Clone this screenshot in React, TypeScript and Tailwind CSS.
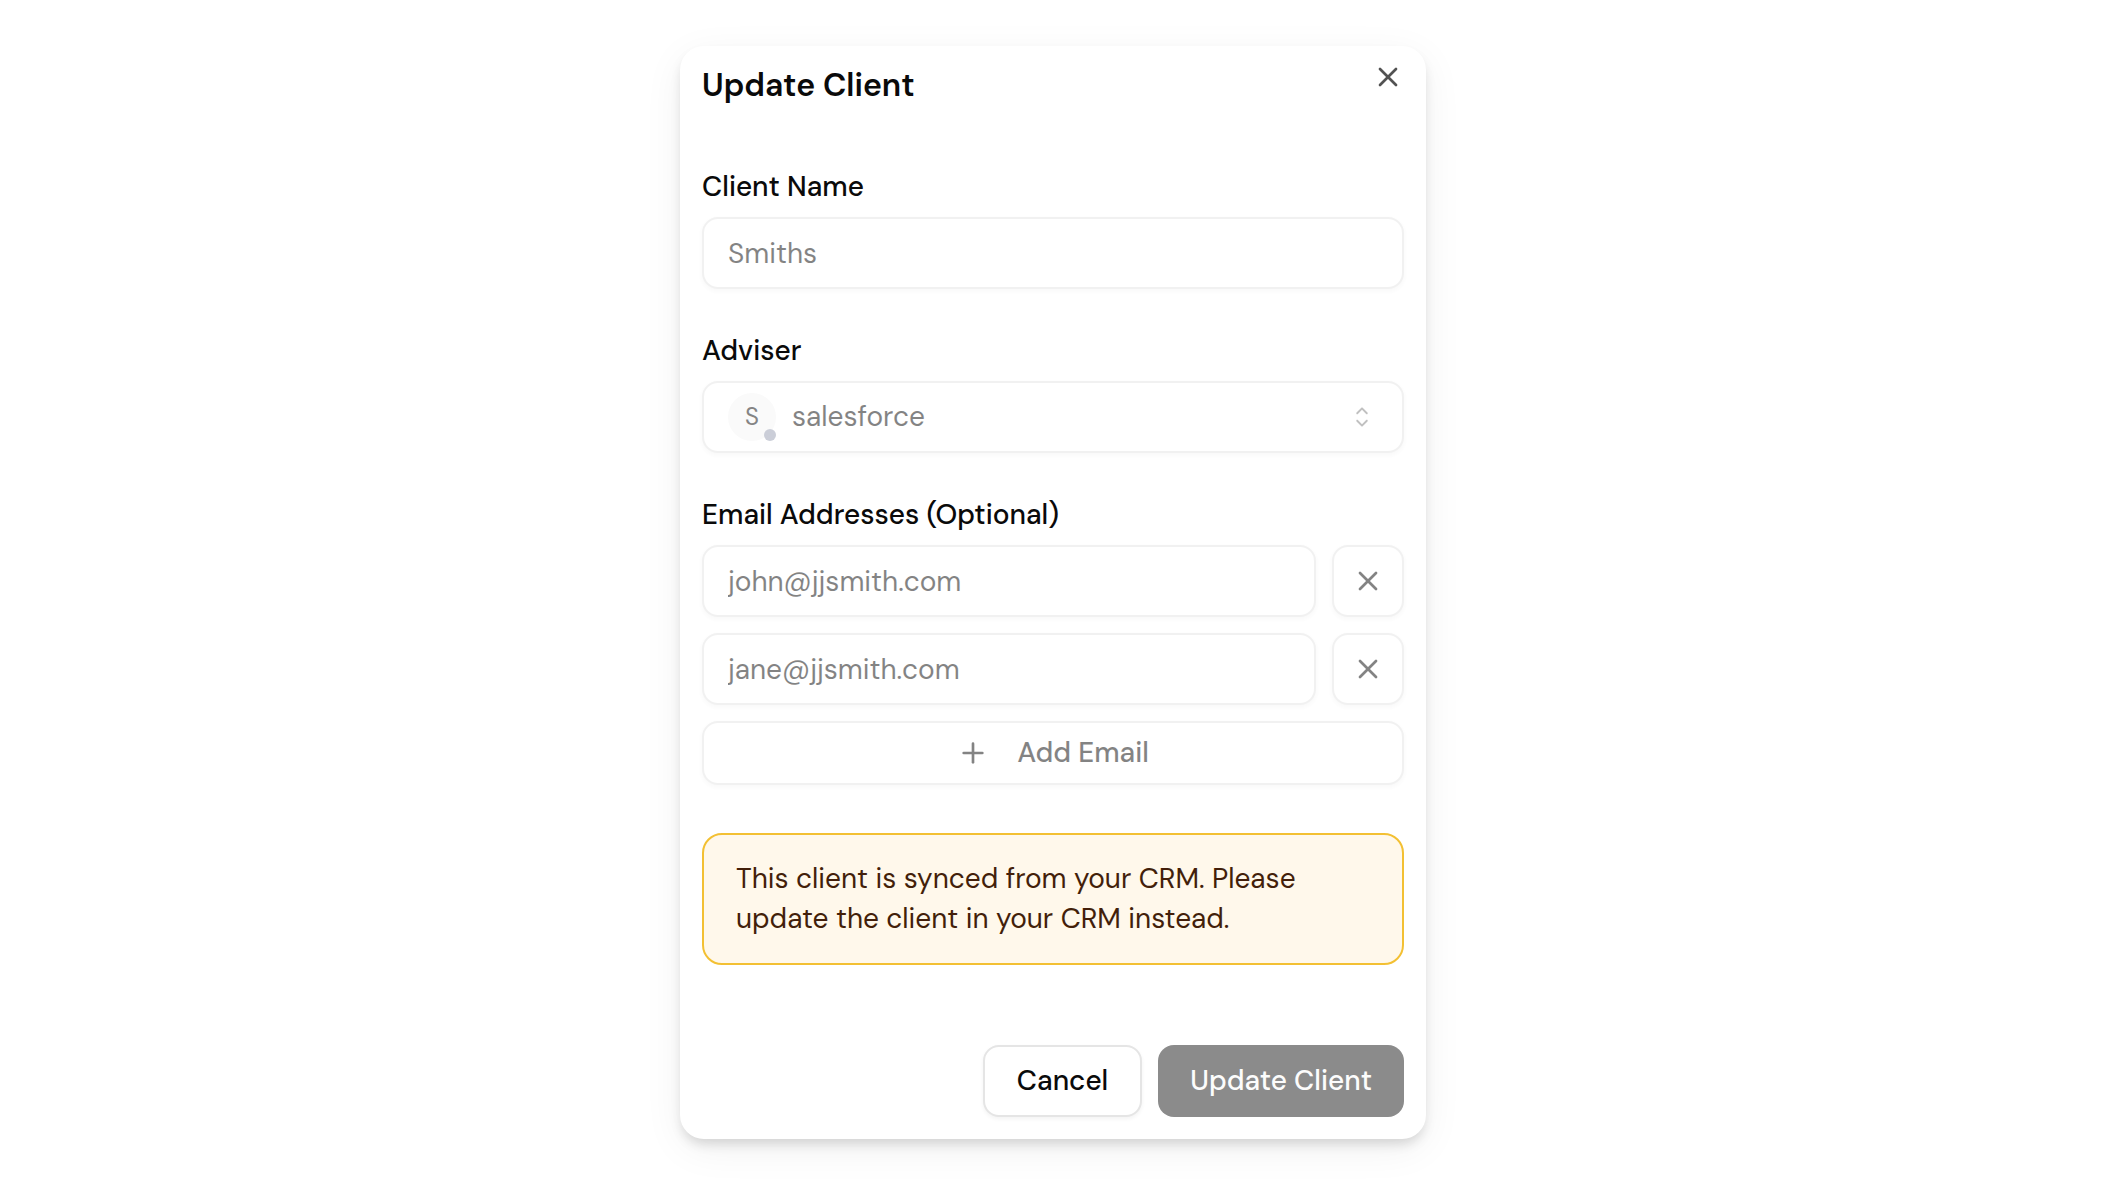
import { useState } from 'react'
import { Plus, X } from 'lucide-react'
import { RxCaretSort } from 'react-icons/rx'

const emails = [
  { id: 'email-0', value: 'john@jjsmith.com' },
  { id: 'email-1', value: 'jane@jjsmith.com' }
]

const advisers = ['salesforce']

const fieldClass =
  'h-[72px] w-full min-w-0 rounded-2xl border-2 border-[#e5e5e5] bg-white px-6 text-[28px] text-neutral-950 shadow-[0_2px_4px_rgba(0,0,0,0.05)] outline-none disabled:opacity-50'

const outlineButtonClass =
  'flex items-center justify-center rounded-2xl border-2 border-[#e5e5e5] bg-white text-[28px] font-medium text-neutral-950 shadow-[0_2px_4px_rgba(0,0,0,0.05)] disabled:opacity-50'

const labelClass = 'text-[28px] leading-7 font-medium text-neutral-950'

export default function App() {
  const [isOpen, setIsOpen] = useState(true)

  if (!isOpen) return null

  return (
    <div className="flex min-h-screen items-center justify-center bg-white font-['DM_Sans','Open_Sans',sans-serif] text-neutral-950">
      <div
        role="dialog"
        aria-labelledby="dialog-title"
        className="w-full max-w-[746px] rounded-3xl bg-white px-[22px] pt-[15px] pb-[22px] shadow-[0_10px_40px_rgba(0,0,0,0.06),0_7px_12px_-2px_rgba(0,0,0,0.14)]"
      >
        {/* Header */}
        <div className="flex items-start justify-between">
          <h2 id="dialog-title" className="text-[32px] leading-12 font-semibold">
            Update Client
          </h2>
          <button type="button" aria-label="Close" onClick={() => setIsOpen(false)} className="opacity-70">
            <X className="size-8" />
          </button>
        </div>

        <form className="mt-16" onSubmit={(e) => e.preventDefault()}>
          <div className="flex flex-col gap-12">
            {/* Client name */}
            <div className="flex flex-col gap-4">
              <label htmlFor="client-name" className={labelClass}>
                Client Name
              </label>
              <input id="client-name" type="text" defaultValue="Smiths" disabled className={fieldClass} />
            </div>

            {/* Adviser */}
            <div className="flex flex-col gap-4">
              <label htmlFor="adviser" className={labelClass}>
                Adviser
              </label>
              <div className="relative">
                <select id="adviser" disabled className={`${fieldClass} block appearance-none pl-[88px]`}>
                  {advisers.map((adviser) => (
                    <option key={adviser}>{adviser}</option>
                  ))}
                </select>
                <div className="pointer-events-none absolute inset-y-0 left-[26px] flex items-center">
                  <div className="relative flex size-12 items-center justify-center rounded-full bg-[#fafafa] text-2xl text-[#848484]">
                    S
                    <span className="absolute right-0 bottom-0 size-3 rounded-full bg-[#cbced8]" />
                  </div>
                </div>
                <div className="pointer-events-none absolute inset-y-0 right-[26px] flex items-center">
                  <RxCaretSort className="size-8 opacity-25" />
                </div>
              </div>
            </div>

            {/* Email addresses */}
            <fieldset>
              <legend className={labelClass}>Email Addresses (Optional)</legend>
              <div className="mt-4 flex flex-col gap-4">
                {emails.map((email, index) => (
                  <div key={email.id} className="flex gap-4">
                    <input
                      id={email.id}
                      type="email"
                      aria-label={`Email ${index + 1}`}
                      defaultValue={email.value}
                      disabled
                      className={fieldClass}
                    />
                    <button
                      type="button"
                      aria-label={`Remove ${email.value}`}
                      disabled
                      className={`${outlineButtonClass} size-[72px] shrink-0`}
                    >
                      <X className="size-8" />
                    </button>
                  </div>
                ))}
                <button type="button" disabled className={`${outlineButtonClass} h-16 w-full gap-7`}>
                  <Plus className="size-8" />
                  Add Email
                </button>
              </div>
            </fieldset>

            {/* Sync notice */}
            <div
              role="alert"
              className="rounded-[20px] border-2 border-[#f3c033] bg-[#fff8eb] px-8 py-6 text-[28px] leading-10 text-[#431f0a]"
            >
              This client is synced from your CRM. Please update the client in your CRM instead.
            </div>
          </div>

          {/* Footer */}
          <div className="mt-20 flex justify-end gap-4">
            <button type="button" onClick={() => setIsOpen(false)} className={`${outlineButtonClass} h-[72px] px-8`}>
              Cancel
            </button>
            <button
              type="submit"
              disabled
              className="h-[72px] rounded-2xl bg-[#8b8b8b] px-8 text-[28px] font-medium text-[#fcfcfc]"
            >
              Update Client
            </button>
          </div>
        </form>
      </div>
    </div>
  )
}
